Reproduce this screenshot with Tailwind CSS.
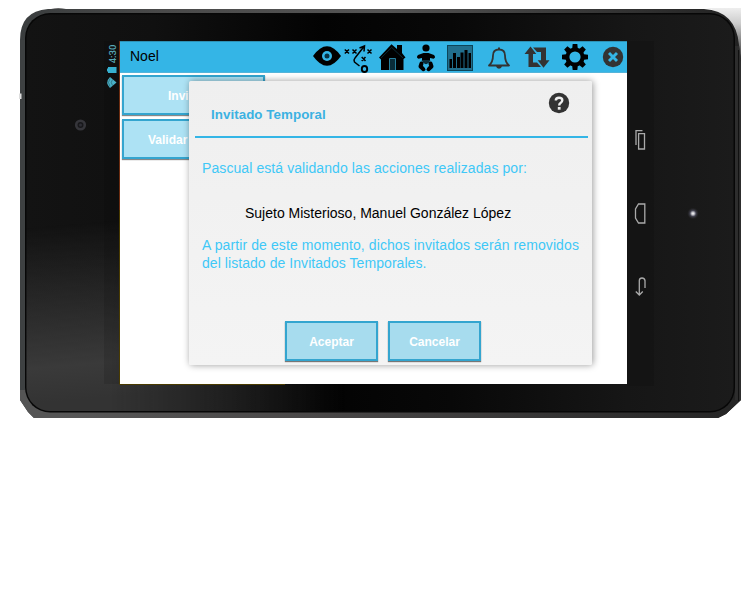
<!DOCTYPE html>
<html lang="es">
<head>
<meta charset="utf-8">
<title>Invitado Temporal</title>
<script src="https://cdn.jsdelivr.net/npm/@tailwindcss/browser@4"></script>
</head>
<body class="bg-white font-['Liberation_Sans',Arial,sans-serif] overflow-hidden">
<div class="relative w-[756px] h-[600px] pl-[120px] pt-[41px]">
  <!-- tablet body -->
  <svg class="absolute inset-0" width="756" height="600" viewBox="0 0 756 600">
    <defs>
      <linearGradient id="base" x1="0" x2="1" y1="0" y2="0"><stop offset="0" stop-color="#131313"/><stop offset=".18" stop-color="#101010"/><stop offset=".42" stop-color="#030303"/><stop offset=".6" stop-color="#080808"/><stop offset=".85" stop-color="#161616"/><stop offset="1" stop-color="#1b1b1b"/></linearGradient>
      <linearGradient id="rise" x1="60" y1="225" x2="75" y2="400" gradientUnits="userSpaceOnUse"><stop offset="0" stop-color="#3b3b3b" stop-opacity="0"/><stop offset=".8" stop-color="#3a3a3a"/><stop offset="1" stop-color="#333"/></linearGradient>
      <linearGradient id="fadex" x1="110" x2="345" y1="0" y2="0" gradientUnits="userSpaceOnUse"><stop offset="0" stop-color="#fff"/><stop offset="1" stop-color="#000"/></linearGradient>
      <mask id="m"><rect width="756" height="600" fill="url(#fadex)"/></mask>
      <linearGradient id="rimT" x1="20" x2="741" y1="0" y2="0" gradientUnits="userSpaceOnUse"><stop offset="0" stop-color="#3a3d3e"/><stop offset=".2" stop-color="#4a4a4a"/><stop offset=".5" stop-color="#555"/><stop offset="1" stop-color="#222"/></linearGradient>
      <linearGradient id="rimB" x1="20" x2="741" y1="0" y2="0" gradientUnits="userSpaceOnUse"><stop offset="0" stop-color="#5a5a5a"/><stop offset=".4" stop-color="#4a4848"/><stop offset="1" stop-color="#252525"/></linearGradient>
      <linearGradient id="shadeV" x1="0" x2="0" y1="8" y2="60" gradientUnits="userSpaceOnUse"><stop offset="0" stop-color="#eee"/><stop offset=".3" stop-color="#ccc"/><stop offset="1" stop-color="#333"/></linearGradient>
      <radialGradient id="led"><stop offset="0" stop-color="#fff"/><stop offset=".25" stop-color="#b8b8c0"/><stop offset=".5" stop-color="#444452"/><stop offset="1" stop-color="#222" stop-opacity="0"/></radialGradient>
      <clipPath id="out"><path d="M48 9H704Q736 11 739 45L741 62V400L726 414L718 418H34L28 412L20 400V40Q20 11 48 9Z"/></clipPath>
    </defs>
    <path d="M706 8H741V70H735Q733 12 706 8Z" fill="url(#shadeV)"/>
    <path d="M51 9Q58 7.500 66 9Z" fill="#333"/>
    <g clip-path="url(#out)">
      <path d="M20 9H741V418H20Z" fill="url(#rimT)"/>
      <path d="M60 400H741V418H60Z" fill="url(#rimB)"/>
      <path d="M20 380H60V418H20Z" fill="#555"/>
      <path d="M20 40H25V390H20Z" fill="#3e4142"/>
      <path d="M735 46H741V400H735Z" fill="#2d2d2d"/>
      <rect x="25" y="13" width="710" height="399.500" rx="25" fill="#070707"/>
      <rect x="26.500" y="14.500" width="707" height="396.500" rx="23.500" fill="url(#base)"/>
      <rect x="26.500" y="14.500" width="707" height="396.500" rx="23.500" fill="url(#rise)" mask="url(#m)"/>
    </g>
    <path d="M738.500 50V401" stroke="#111" fill="none"/>
    <path d="M104 41H119V384H104Z" fill="#050505" opacity=".13"/>
    <path d="M627 41H654V386H627Z" fill="#111" opacity=".5"/>
    <path d="M119.500 41V210" stroke="#6b2c10"/><path d="M119.500 210V384.500H285" stroke="#4a3b00" fill="none"/>
    <path d="M19 93.500H21.500V99H19Z" fill="#ddd"/>
    <circle cx="80.500" cy="125" r="4.300" fill="#18181b" stroke="#35353a" stroke-width="2.600"/><circle cx="80.500" cy="125" r="1.500" fill="#2e2e35"/>
    <circle cx="693" cy="213.500" r="6" fill="url(#led)"/>
    <text x="0" y="0" transform="translate(115.700 63.300) rotate(-90)" font-family="Roboto,sans-serif" font-size="9.600" font-weight="500" textLength="18.800" fill="#58a8b8">4:30</text>
    <path d="M108 67H116.500V73H108ZM107 68.500H108V71.500H107Z" fill="#36b0d0"/>
    <path d="M116.500 82.500L110 77Q104.500 82.500 110 88Z" fill="#49b1c8"/><path d="M110 78.500Q107 82.500 110 86.500M112.500 79.500Q110 82.500 112.500 85.500" stroke="#235862" stroke-width=".6" fill="none"/>
    <g fill="none" stroke="#aaa" stroke-width="1.300">
      <path d="M638.600 133.600H644.500V149H638.600ZM642.500 130.600H636V145"/>
      <path d="M644.800 204V223H638.500L635.500 218V209L638.500 204Z"/>
      <path d="M645 288V280.500Q644.500 278 642 278Q639.500 278 639.300 280.500V295M635.800 291.500L639.300 295L642.800 291.500"/>
    </g>
  </svg>

  <!-- screen -->
  <main class="relative w-[507px] h-[343px] bg-white">
    <header class="flex h-8 w-full bg-[#34b5e6] shadow-[inset_0_1px_#2e91b5,inset_0_-1px_#55b4d9]">
      <div class="w-[192px] pl-[10px] pt-[7px] text-[14px] leading-4 text-black">Noel</div>
      <svg width="31" height="32" viewBox="312 41 31 32"><path d="M313 56Q327 36.500 341 56Q327 75.500 313 56Z"/><circle cx="327" cy="56" r="5" fill="#34b5e6"/><circle cx="327" cy="56" r="2.500" fill="#083344"/></svg>
      <svg class="overflow-visible" width="33" height="32" viewBox="343 41 33 32" fill="none" stroke="#000" stroke-width="1.500"><path d="M344.800 49.500L349 53.500M349 49.500L344.800 53.500M352.500 49.500L356.500 53.500M356.500 49.500L352.500 53.500M367.500 49.500L371.500 53.500M371.500 49.500L367.500 53.500M361.700 57L365.500 61M365.500 57L361.700 61"/><path d="M359.500 66L354.500 62Q353.300 60 355 58L364 46.500M359.500 48L364.500 46L364 51.500"/><ellipse cx="364.500" cy="69" rx="2.700" ry="3" stroke-width="1.900"/></svg>
      <svg width="34" height="32" viewBox="376 41 34 32"><path d="M379 57.500L391.500 44.300L397 49V45H402V53L405.500 57.500L403.500 59V70H381V59.500Z"/><path d="M389.500 70V58.500H395.500V70" fill="#092c39" stroke="#26809f"/><path d="M381 58L391.700 47.500L403 58" fill="none" stroke="#134557" stroke-width=".6"/></svg>
      <svg width="30" height="32" viewBox="410 41 30 32"><circle cx="426" cy="48" r="3.600"/><path d="M423.500 53H428.500L434 55Q436.300 57.500 433.500 58.800L430 58V60.500H422V58L418.500 58.800Q415.700 57.500 418 55Z"/><path d="M421.500 60H430.500L428.500 63L426 64.500L423.500 63Z" fill="#0b2d3a"/><path d="M421.500 63.500L420.500 66.500L423.500 69.200M430.500 63.500L431.500 66.500L428.500 69.200" fill="none" stroke="#000" stroke-width="4" stroke-linejoin="round" stroke-linecap="round"/><path d="M426 64V69M424 66.500H428" stroke="#34b5e6" stroke-width="1.300"/></svg>
      <svg width="40" height="32" viewBox="440 41 40 32"><rect x="447.500" y="45.500" width="25" height="25" fill="#216f8d" stroke="#0d4559"/><path d="M449.500 59H452V68H449.500ZM453 53H456V68H453ZM457 57H460V68H457ZM460.500 52.500H463.500V68H460.500ZM464.500 50H467.500V68H464.500ZM468.500 53H471V68H468.500Z"/></svg>
      <svg width="38" height="32" viewBox="480 41 38 32"><path d="M489 65.500Q493 62 493 55.500Q493 49.500 499 49.500Q505 49.500 505 55.500Q505 62 509 65.500Z" fill="none" stroke="#333" stroke-width="1.800" stroke-linejoin="round"/><path d="M498 47.500H500V50H498ZM496 66H502Q501.500 68.700 499 68.700Q496.500 68.700 496 66Z" fill="#333"/></svg>
      <svg width="38" height="32" viewBox="518 41 38 32" fill="#333"><path d="M530.500 46.500L536.300 54H533V62.500H537L541 67H528.500V54H524.500Z"/><path d="M543.500 67.700L549.500 60.200H546V47.500H533L537 52H541V60.200H537.700Z"/></svg>
      <svg width="39" height="32" viewBox="556 41 39 32"><circle cx="575" cy="57" r="7.600" fill="none" stroke="#000" stroke-width="4"/><g><path id="t" d="M572 50L572.700 44H577.300L578 50Z"/><use href="#t" transform="rotate(45 575 57)"/><use href="#t" transform="rotate(90 575 57)"/><use href="#t" transform="rotate(135 575 57)"/><use href="#t" transform="rotate(180 575 57)"/><use href="#t" transform="rotate(225 575 57)"/><use href="#t" transform="rotate(270 575 57)"/><use href="#t" transform="rotate(315 575 57)"/></g></svg>
      <svg width="32" height="32" viewBox="595 41 32 32"><circle cx="613" cy="57" r="10.200" fill="#333"/><path d="M609 53L617 61M617 53L609 61" stroke="#34b5e6" stroke-width="2.900"/></svg>
    </header>

    <div class="flex flex-col gap-1 pt-[2px] pl-[2px] text-[12px] font-bold text-white">
      <button class="w-[143px] h-10 border-2 border-[#34a5cf] bg-[#ade2f4] shadow-[0_1px_1px_#888] text-left pl-[44px] pt-[2px]">Invitados</button>
      <button class="w-[143px] h-10 border-2 border-[#34a5cf] bg-[#ade2f4] shadow-[0_1px_1px_#888] text-left pl-[24px] pt-[2px] whitespace-nowrap">Validar</button>
    </div>

    <section class="absolute left-[69px] top-10 w-[403px] h-[284px] rounded-[2px] bg-linear-to-b from-[#efefef] to-[#f4f4f4] shadow-[1px_0_7px_rgba(0,0,0,.4)] px-[6px] flex flex-col">
      <div class="flex h-[57px] w-[393px] shrink-0 justify-between border-b-2 border-[#34b5e6] pl-4 pr-[18px]">
        <h1 class="pt-[25px] text-[13.330px] leading-[18px] tracking-[0.06px] font-bold text-[#3cb2e2]">Invitado Temporal</h1>
        <svg class="mt-[11px]" width="22" height="22" viewBox="548 92 22 22"><circle cx="559" cy="103" r="10.200" fill="#333"/><path d="M555.800 100.500Q555.800 97.800 559 97.800Q562.300 97.800 562.300 100.300Q562.300 101.700 560.800 102.700Q559.200 103.600 559.200 105.500" fill="none" stroke="#eee" stroke-width="2.400"/><path d="M557.800 107H560.600V109.700H557.800Z" fill="#eee"/></svg>
      </div>
      <div class="pl-[7px] text-[14px] leading-[18px] text-[#3fc8f7] whitespace-nowrap">
        <p class="pt-[21px] tracking-[0.085px]">Pascual está validando las acciones realizadas por:</p>
        <p class="pt-[27px] pl-[43px] text-black">Sujeto Misterioso, Manuel González López</p>
        <p class="pt-[14px]"><span class="tracking-[0.1px]">A partir de este momento, dichos invitados serán removidos</span><br><span class="tracking-[0.06px]">del listado de Invitados Temporales.</span></p>
      </div>
      <div class="mt-[49px] ml-[90px] flex gap-[10px] text-[12px] font-bold text-white">
        <button class="w-[93px] h-10 border-2 border-[#34a5cf] bg-[#a7dcee] shadow-[0_1px_1px_#777] pt-[2px]">Aceptar</button>
        <button class="w-[93px] h-10 border-2 border-[#34a5cf] bg-[#a7dcee] shadow-[0_1px_1px_#777] pt-[2px]">Cancelar</button>
      </div>
    </section>
  </main>
</div>
</body>
</html>
